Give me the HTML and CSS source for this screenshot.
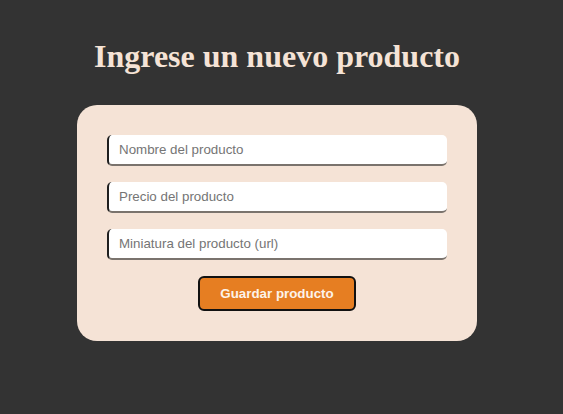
FILE: index.html
```html
<!DOCTYPE html>
<html lang="es">
<head>
<meta charset="utf-8">
<title>Nuevo producto</title>
<link rel="stylesheet" href="styles.css">
</head>
<body>
<main class="page">
  <h1 class="title">Ingrese un nuevo producto</h1>
  <form class="card">
    <input class="field" type="text" placeholder="Nombre del producto">
    <input class="field" type="text" placeholder="Precio del producto">
    <input class="field" type="text" placeholder="Miniatura del producto (url)">
    <button class="btn" type="button">Guardar producto</button>
  </form>
</main>
</body>
</html>
```

FILE: styles.css
```css
html, body {
  margin: 0;
  padding: 0;
  background: #333333;
  height: 100%;
}
.page {
  width: 400px;
  margin-left: 77px;
  padding-top: 38px;
}
.title {
  margin: 0 0 30px;
  font-family: "Liberation Serif", "Times New Roman", serif;
  font-weight: bold;
  font-size: 32px;
  line-height: 37px;
  color: #f5e3d6;
  text-align: center;
}
.card {
  box-sizing: border-box;
  width: 400px;
  background: #f5e3d6;
  border-radius: 20px;
  padding: 30px;
  display: flex;
  flex-direction: column;
  align-items: center;
  gap: 16px;
}
.field {
  box-sizing: border-box;
  width: 340px;
  height: 31px;
  margin: 0;
  border: none;
  border-left: 2px solid #1f1f1f;
  border-bottom: 2px solid #7a736d;
  border-radius: 5px;
  background: #ffffff;
  padding: 0 10px;
  font-family: "Liberation Sans", Arial, sans-serif;
  font-size: 13.333px;
  color: #333;
  outline: none;
}
.field::placeholder {
  color: #757575;
}
.btn {
  box-sizing: border-box;
  width: 158px;
  height: 35px;
  margin: 0;
  border: 2px solid #111;
  border-radius: 6px;
  background: #e67e22;
  color: #fdf3ea;
  font-family: "Liberation Sans", Arial, sans-serif;
  font-weight: bold;
  font-size: 13.333px;
  cursor: pointer;
}
```
